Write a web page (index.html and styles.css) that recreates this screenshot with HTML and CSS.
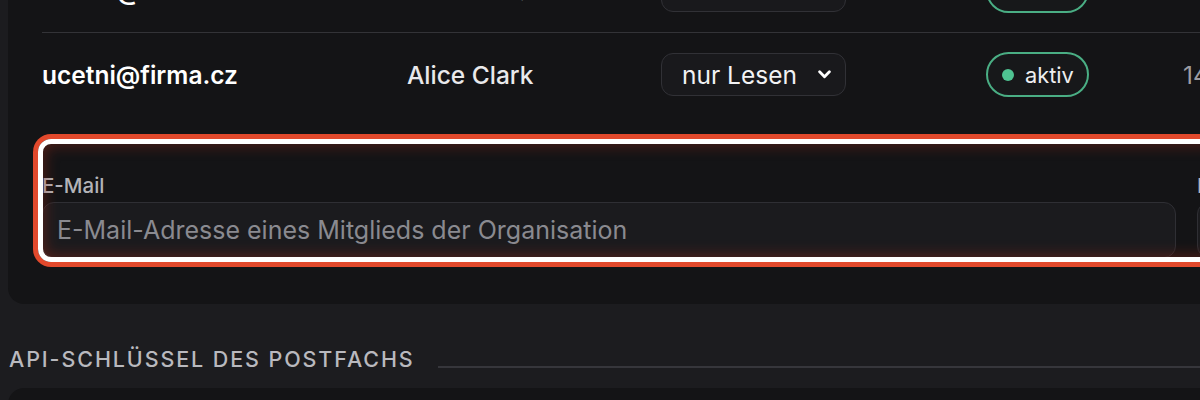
FILE: index.html
```html
<!DOCTYPE html>
<html lang="de">
<head>
<meta charset="utf-8">
<title>Mitglieder</title>
<link rel="stylesheet" href="styles.css">
</head>
<body>
<main class="page">
  <section class="card members">
    <div class="row">
      <div class="cell email">reditel@firma.cz</div>
      <div class="cell name">Petr Dvorak</div>
      <div class="cell"><div class="select"><span>Verwalter</span><svg class="chev" viewBox="0 0 12 8" width="13" height="9"><path d="M1.5 1.5 6 6l4.5-4.5" fill="none" stroke="#fff" stroke-width="2.6" stroke-linecap="round" stroke-linejoin="round"/></svg></div></div>
      <div class="cell"><span class="badge"><span class="dot"></span>aktiv</span></div>
      <div class="cell date">12.01.2024</div>
    </div>
    <div class="row">
      <div class="cell email">ucetni@firma.cz</div>
      <div class="cell name">Alice Clark</div>
      <div class="cell"><div class="select"><span>nur Lesen</span><svg class="chev" viewBox="0 0 12 8" width="13" height="9"><path d="M1.5 1.5 6 6l4.5-4.5" fill="none" stroke="#fff" stroke-width="2.6" stroke-linecap="round" stroke-linejoin="round"/></svg></div></div>
      <div class="cell"><span class="badge"><span class="dot"></span>aktiv</span></div>
      <div class="cell date">14.03.2024</div>
    </div>
    <form class="invite">
      <div class="field wide">
        <label class="label" for="mail">E-Mail</label>
        <input class="input" id="mail" type="text" placeholder="E-Mail-Adresse eines Mitglieds der Organisation">
      </div>
      <div class="field">
        <label class="label" for="role">Rolle</label>
        <input class="input" id="role" type="text">
      </div>
      <div class="highlight"></div>
    </form>
  </section>

  <div class="section-head">
    <h2 class="section-title">API-Schlüssel des Postfachs</h2>
    <div class="rule"></div>
  </div>

  <section class="card keys"></section>
</main>
</body>
</html>
```
FILE: styles.css
```css
* { box-sizing: border-box; }

html, body {
  margin: 0;
  padding: 0;
  background: #1c1c1f;
  overflow: hidden;
  font-family: "Inter", "Noto Sans", sans-serif;
  color: #ececee;
}

.page {
  width: 1400px;
  padding-left: 8px;
}

.card {
  background: #141416;
  border-radius: 16px;
}

.members {
  margin-top: -51px;
  padding: 0 0 46px 34px;
}

.row {
  display: grid;
  grid-template-columns: 365px 254px 325px 197px 1fr;
  align-items: center;
  height: 83px;
}

.row + .row {
  border-top: 1px solid #333337;
  height: 84px;
}

.cell {
  font-size: 24.5px;
  white-space: nowrap;
}

.email {
  font-weight: 600;
  color: #ffffff;
}

.name {
  font-weight: 450;
  color: #e9e9eb;
}

.date {
  color: #9c9ca2;
}

.select {
  width: 185px;
  height: 43px;
  display: flex;
  align-items: center;
  justify-content: space-between;
  padding: 0 14px 0 20px;
  border: 1.5px solid #313136;
  border-radius: 12px;
  background: #19191c;
  color: #f2f2f4;
  font-size: 24.5px;
}

.chev { display: block; }

.badge {
  display: inline-flex;
  align-items: center;
  gap: 11px;
  height: 45px;
  padding: 0 13px 0 14px;
  border: 2px solid #4aae84;
  border-radius: 23px;
  background: #17181a;
  color: #eeeeef;
  font-size: 21.8px;
}

.dot {
  width: 12px;
  height: 12px;
  border-radius: 50%;
  background: #4fc392;
}

.invite {
  position: relative;
  display: flex;
  gap: 21px;
  padding-top: 58px;
}

.field {
  display: flex;
  flex-direction: column;
  flex-shrink: 0;
  gap: 4px;
  width: 300px;
}

.field.wide { width: 1134px; }

.label {
  font-size: 20.5px;
  line-height: 24px;
  color: #b3b3b8;
  font-weight: 450;
}

.input {
  height: 56px;
  border: 1.5px solid #2f2f34;
  border-radius: 12px;
  background: #1b1b1e;
  padding: 0 14px;
  font-family: inherit;
  font-size: 25px;
  color: #e8e8ea;
  outline: none;
}

.input::placeholder { color: #8a8a90; }

.highlight {
  position: absolute;
  left: -4px;
  top: 23px;
  width: 1400px;
  height: 123px;
  border: 5px solid #ffffff;
  border-radius: 13px;
  box-shadow: 0 0 0 5px #e2492c, inset 0 0 14px 2px rgba(150, 40, 25, 0.45);
  pointer-events: none;
}

.section-head {
  display: flex;
  align-items: center;
  gap: 23px;
  margin: 41px 0 15px;
  padding-left: 1px;
}

.section-title {
  margin: 0;
  font-size: 21.5px;
  line-height: 28px;
  font-weight: 500;
  letter-spacing: 1.9px;
  text-transform: uppercase;
  color: #b9b9be;
  white-space: nowrap;
}

.rule {
  flex: 1;
  height: 2px;
  margin-top: 16px;
  background: #36363b;
}

.keys {
  height: 200px;
}
```
